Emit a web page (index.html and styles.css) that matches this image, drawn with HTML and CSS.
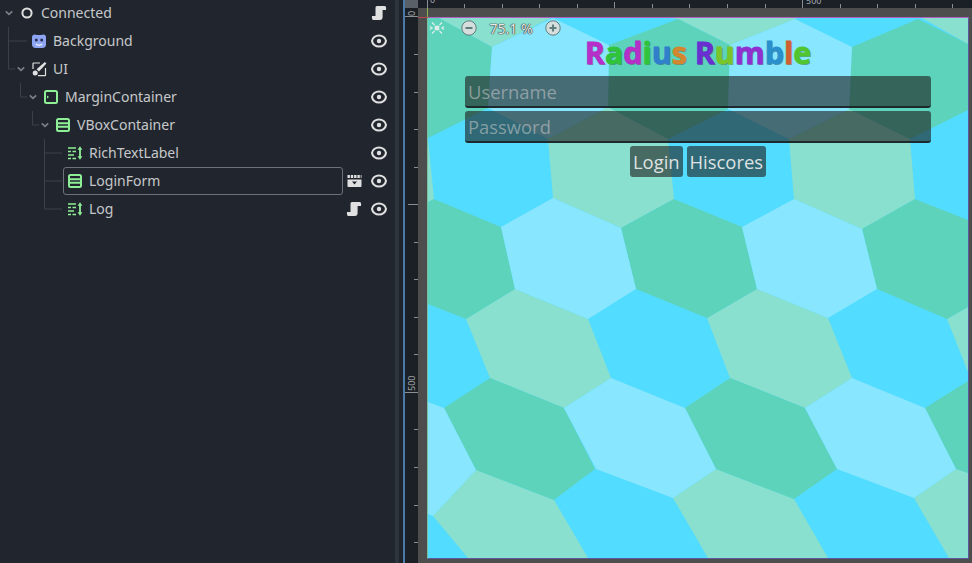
FILE: index.html
```html
<!DOCTYPE html>
<html>
<head>
    <meta charset="utf-8" />
    <title>Radius Rumble - Scene</title>
    <link rel="stylesheet" href="styles.css">
</head>
<body>
    <svg width="0" height="0" class="defs">
        <defs>
            <symbol id="chev" viewBox="0 0 14 14"><path d="M4.8 5.3 8 8.3 11.2 5.3" fill="none" stroke="#7c8187" stroke-width="1.7"/></symbol>
            <symbol id="eye" viewBox="0 0 16 16"><path d="M8 2.4C11.6 2.4 14.6 5 15 8 14.6 11 11.6 13.6 8 13.6 4.4 13.6 1.4 11 1 8 1.4 5 4.4 2.4 8 2.4Z" fill="none" stroke="#e0e0e0" stroke-width="2"/><circle cx="8" cy="8" r="2.2" fill="#e0e0e0"/></symbol>
            <symbol id="script" viewBox="0 0 16 16"><path d="M6 1H13.5C15 1 15.4 2.6 15 5H11.6V12C11.6 14 10.6 15 9 15H2.5C1.2 15 .7 13.5 1 11H4.5V3C4.5 1.8 5 1 6 1Z" fill="#e0e0e0"/></symbol>
            <symbol id="vbox" viewBox="0 0 16 16"><rect x="2" y="2" width="12" height="12" rx="1.5" fill="none" stroke="#8eef97" stroke-width="2"/><path d="M2 6.3H14M2 9.7H14" stroke="#8eef97" stroke-width="2"/></symbol>
            <symbol id="rich" viewBox="0 0 16 16"><path d="M1 3H9M1 6.5H4M5.5 6.5H9M1 10H7M1 13.5H4M5.5 13.5H9" stroke="#8eef97" stroke-width="1.6" fill="none"/><path d="M13 3V13" stroke="#8eef97" stroke-width="1.8"/><path d="M10.6 4.8 13 1.2 15.4 4.8ZM10.6 11.2 13 14.8 15.4 11.2Z" fill="#8eef97"/></symbol>
        </defs>
    </svg>

    <div class="editor">
        <div class="tree">
            <svg class="guides" width="70" height="220">
                <path d="M8.5 27V69H15M8.5 41H27M20.5 83V97H27M32.5 111V125H39M44.5 139V209H62M44.5 153H62M44.5 181H62" fill="none" stroke="#3c4149"/>
            </svg>

            <div class="row level-0">
                <span class="arrow"><svg width="14" height="14"><use href="#chev"/></svg></span>
                <div class="node">
                    <svg class="icon" viewBox="0 0 16 16"><circle cx="8" cy="8" r="4.6" fill="none" stroke="#e0e0e0" stroke-width="2"/></svg>
                    <span>Connected</span>
                </div>
                <div class="tools"><span class="slot"></span><svg class="icon"><use href="#script"/></svg></div>
            </div>
            <div class="row level-1">
                <span class="arrow"></span>
                <div class="node">
                    <svg class="icon" viewBox="0 0 16 16">
                        <path d="M4 1.5C5.5 2.3 10.5 2.3 12 1.5 14 1.5 15 2.8 15 4.5V11.5C15 13.5 13.5 15 11.5 15H4.5C2.5 15 1 13.5 1 11.5V4.5C1 2.8 2 1.5 4 1.5Z" fill="#8da5f3"/>
                        <circle cx="5.3" cy="7" r="1.5" fill="#2a3150"/><circle cx="10.7" cy="7" r="1.5" fill="#2a3150"/>
                        <path d="M4.8 11C6.5 12.6 9.5 12.6 11.2 11" fill="none" stroke="#e8ecff" stroke-width="1.4"/>
                    </svg>
                    <span>Background</span>
                </div>
                <div class="tools"><span class="slot"></span><svg class="icon"><use href="#eye"/></svg></div>
            </div>
            <div class="row level-1">
                <span class="arrow"><svg width="14" height="14"><use href="#chev"/></svg></span>
                <div class="node">
                    <svg class="icon" viewBox="0 0 16 16">
                        <path d="M9 2H3C2.4 2 2 2.4 2 3V8M14.5 7V14C14.5 14.4 14.3 14.6 14 14.6H7" fill="none" stroke="#e0e0e0" stroke-width="1.2"/>
                        <path d="M13.8 1 15.4 2.6 8 10.4 5.6 8.2Z" fill="#e0e0e0"/>
                        <circle cx="4.2" cy="12" r="2.5" fill="#e0e0e0"/>
                    </svg>
                    <span>UI</span>
                </div>
                <div class="tools"><span class="slot"></span><svg class="icon"><use href="#eye"/></svg></div>
            </div>
            <div class="row level-2">
                <span class="arrow"><svg width="14" height="14"><use href="#chev"/></svg></span>
                <div class="node">
                    <svg class="icon" viewBox="0 0 16 16">
                        <rect x="2" y="2" width="12" height="12" rx="1.5" fill="none" stroke="#8eef97" stroke-width="2"/>
                        <path d="M4 6.5 6 8 4 9.5Z" fill="#8eef97"/>
                    </svg>
                    <span>MarginContainer</span>
                </div>
                <div class="tools"><span class="slot"></span><svg class="icon"><use href="#eye"/></svg></div>
            </div>
            <div class="row level-3">
                <span class="arrow"><svg width="14" height="14"><use href="#chev"/></svg></span>
                <div class="node">
                    <svg class="icon"><use href="#vbox"/></svg>
                    <span>VBoxContainer</span>
                </div>
                <div class="tools"><span class="slot"></span><svg class="icon"><use href="#eye"/></svg></div>
            </div>
            <div class="row level-4">
                <span class="arrow"></span>
                <div class="node">
                    <svg class="icon"><use href="#rich"/></svg>
                    <span>RichTextLabel</span>
                </div>
                <div class="tools"><span class="slot"></span><svg class="icon"><use href="#eye"/></svg></div>
            </div>
            <div class="row level-4">
                <span class="arrow"></span>
                <div class="node selected">
                    <svg class="icon"><use href="#vbox"/></svg>
                    <span>LoginForm</span>
                </div>
                <div class="tools">
                    <svg class="icon" viewBox="0 0 16 16">
                        <path d="M1.5 3.5H15.5" stroke="#e0e0e0" stroke-width="3" stroke-dasharray="2.4 .9" fill="none"/>
                        <path d="M1.5 6.5H15.5V13.2C15.5 13.7 15.2 14 14.7 14H2.3C1.8 14 1.5 13.7 1.5 13.2Z" fill="#e0e0e0"/>
                        <path d="M6 8.5H11L8.5 11.6Z" fill="#21262e"/>
                    </svg>
                    <svg class="icon"><use href="#eye"/></svg>
                </div>
            </div>
            <div class="row level-4">
                <span class="arrow"></span>
                <div class="node">
                    <svg class="icon"><use href="#rich"/></svg>
                    <span>Log</span>
                </div>
                <div class="tools"><svg class="icon"><use href="#script"/></svg><svg class="icon"><use href="#eye"/></svg></div>
            </div>
        </div>

        <div class="splitter"></div>

        <div class="viewport">
            <div class="corner"><div class="corner-top"></div><svg class="corner-label" width="13" height="9"><text transform="translate(10 8) rotate(-90)" class="ruler-text">0</text></svg></div>
            <svg class="ruler-h" width="554" height="8">
                <path d="M9.5 0V8M46.5 4V8M84.5 4V8M121.5 4V8M159.5 4V8M196.5 2V8M234.5 4V8M271.5 4V8M309.5 4V8M347.5 4V8M384.5 0V8M422.5 4V8M459.5 4V8M497.5 4V8M534.5 4V8" stroke="#8a8e93"/>
                <text x="12" y="3" class="ruler-text">0</text>
                <text x="388" y="4" class="ruler-text">500</text>
            </svg>
            <svg class="ruler-v" width="13" height="546">
                <path d="M0 8.5H13M9 46.5H13M9 84.5H13M9 121.5H13M9 159.5H13M3 196.5H13M9 234.5H13M9 271.5H13M9 309.5H13M9 346.5H13M0 384.5H13M9 421.5H13M9 459.5H13M9 497.5H13M9 534.5H13" stroke="#8a8e93"/>
                <text transform="translate(10 383) rotate(-90)" class="ruler-text">500</text>
            </svg>

            <div class="canvas">
                <div class="game">
                    <svg class="hexes" width="540" height="540" viewBox="0 1 540 540">
                        <rect width="540" height="541" fill="#52dcff"/>
                        <g class="pale">
                            <polygon points="9,0 64,30 125,0"/>
                            <polygon points="232,0 250,2 302,28 367,2 370,0"/>
                            <polygon points="492,0 540,0 540,27"/>
                            <polygon points="0,122 6,182 0,185"/>
                            <polygon points="120,122 180,90 240,122 246,182 193,211 125,181"/>
                            <polygon points="361,122 421,92 482,122 487,182 434,212 366,182"/>
                            <polygon points="87,272 160,302 183,361 136,391 62,361 38,302"/>
                            <polygon points="329,272 400,301 424,361 377,391 302,361 279,301"/>
                            <polygon points="519,302 540,290 540,355"/>
                            <polygon points="48,453 126,483 160,541 40,541 5,499"/>
                            <polygon points="245,481 288,452 366,482 400,541 280,541"/>
                            <polygon points="486,481 528,452 540,456 540,541 521,541"/>
                        </g>
                        <g class="mid">
                            <polygon points="0,0 9,0 64,30 60,91 0,121"/>
                            <polygon points="250,2 302,28 300,92 240,122 180,90 181,28"/>
                            <polygon points="490,2 540,27 540,93 482,122 421,92 424,30"/>
                            <polygon points="0,185 6,182 73,210 87,272 38,302 0,287"/>
                            <polygon points="193,211 246,182 314,210 329,272 279,301 208,272"/>
                            <polygon points="434,212 487,182 540,203 540,290 519,302 449,272"/>
                            <polygon points="62,361 136,391 167,452 126,483 48,453 16,391"/>
                            <polygon points="302,361 377,391 409,452 366,482 288,452 257,391"/>
                            <polygon points="497,391 540,364 540,456 528,452"/>
                        </g>
                        <g class="light">
                            <polygon points="64,30 125,1 181,28 180,90 120,122 60,91"/>
                            <polygon points="302,28 367,2 424,30 421,92 361,122 300,92"/>
                            <polygon points="73,210 125,181 193,211 208,272 160,302 87,272"/>
                            <polygon points="314,210 366,182 434,212 449,272 400,301 329,272"/>
                            <polygon points="0,385 16,391 48,453 5,499 0,497"/>
                            <polygon points="183,361 257,391 288,452 245,481 168,452 136,391"/>
                            <polygon points="424,361 497,391 528,452 486,481 409,452 377,391"/>
                        </g>
                    </svg>

                    <div class="zoom-bar">
                        <svg class="zoom-reset" viewBox="0 0 16 16">
                            <rect x="5.7" y="5.7" width="4.6" height="4.6" fill="#dcefea"/>
                            <path d="M3 2.5 5.5 5M13 2.5 10.5 5M3 13.5 5.5 11M13 13.5 10.5 11M1 6.5 3 8 1 9.5M15 6.5 13 8 15 9.5" stroke="#dcefea" stroke-width="1.3" fill="none"/>
                        </svg>
                        <svg class="zoom-btn" viewBox="0 0 16 16"><circle cx="8" cy="8" r="7.2" fill="#d5dedd" stroke="#5f7d7d" stroke-width="1"/><path d="M4.5 8H11.5" stroke="#5f7d7d" stroke-width="2"/></svg>
                        <span class="zoom-value">75.1 %</span>
                        <svg class="zoom-btn" viewBox="0 0 16 16"><circle cx="8" cy="8" r="7.2" fill="#d5dedd" stroke="#5f7d7d" stroke-width="1"/><path d="M4.5 8H11.5M8 4.5V11.5" stroke="#5f7d7d" stroke-width="2"/></svg>
                    </div>

                    <div class="form">
                        <div class="title"><span class="c1">R</span><span class="c2">a</span><span class="c1">d</span><span class="c2">i</span><span class="c3">u</span><span class="c4">s</span> <span class="c5">R</span><span class="c6">u</span><span class="c7">m</span><span class="c8">b</span><span class="c9">l</span><span class="c10">e</span></div>
                        <div class="field">Username</div>
                        <div class="field">Password</div>
                        <div class="buttons">
                            <div class="btn">Login</div>
                            <div class="btn">Hiscores</div>
                        </div>
                    </div>
                </div>
            </div>
        </div>
    </div>
</body>
</html>
```
FILE: styles.css
```css
* {
    box-sizing: border-box;
}

html, body {
    margin: 0;
    height: 100%;
    overflow: hidden;
}

body {
    font-family: "Noto Sans", sans-serif;
    background-color: #21262e;
}

.defs {
    position: absolute;
}

.editor {
    display: flex;
    width: 972px;
    height: 563px;
}

/* scene tree */
.tree {
    position: relative;
    width: 395px;
    background-color: #21262e;
    color: #c6c8ca;
    font-size: 14px;
}

.guides {
    position: absolute;
    left: 0;
    top: 0;
}

.row {
    position: relative;
    display: flex;
    align-items: center;
    height: 28px;
}

.row:first-of-type {
    margin-top: -1px;
}

.level-0 { padding-left: 1px; }
.level-1 { padding-left: 13px; }
.level-2 { padding-left: 25px; }
.level-3 { padding-left: 37px; }
.level-4 { padding-left: 49px; }

.arrow {
    display: flex;
    width: 14px;
    height: 14px;
    flex-shrink: 0;
}

.node {
    display: flex;
    align-items: center;
    gap: 6px;
    flex: 1;
    height: 28px;
    padding-left: 3px;
    border: 1px solid transparent;
    border-radius: 3px;
}

.node span {
    margin-bottom: 2px;
}

.selected {
    border-color: #6d7178;
}

.icon {
    display: block;
    width: 16px;
    height: 16px;
    flex-shrink: 0;
}

.tools {
    display: flex;
    gap: 9px;
    margin-left: 3px;
    padding-right: 8px;
}

.slot {
    width: 16px;
    height: 16px;
}

.splitter {
    width: 10px;
    background: linear-gradient(to right, #2d343e 0 4px, #1f242c 4px 8px, #4a7aa8 8px);
}

/* 2d viewport */
.viewport {
    flex: 1;
    display: grid;
    grid-template-columns: 13px 1fr;
    grid-template-rows: 8px 1fr;
    background-color: #1b1f26;
}

.corner {
    grid-row: 1 / 2;
    position: relative;
    background-color: #5a6068;
}

.corner-top {
    height: 8px;
}

.corner-label {
    position: absolute;
    left: 0;
    top: 8px;
    z-index: 2;
}

.ruler-h, .ruler-v {
    display: block;
    background-color: #1b1f26;
}

.ruler-v {
    grid-row: 2;
    grid-column: 1;
}

.ruler-h {
    grid-row: 1;
    grid-column: 2;
}

.ruler-text {
    font-size: 9px;
    fill: #a3a7ab;
}

.canvas {
    grid-row: 2;
    grid-column: 2;
    position: relative;
    padding: 9px 3px 0 9px;
    background-color: #4d4d4d;
}

.canvas::before {
    content: "";
    position: absolute;
    left: 9px;
    top: 0;
    width: 1px;
    height: 9px;
    background-color: #8fb84c;
}

.canvas::after {
    content: "";
    position: absolute;
    left: 0;
    top: 9px;
    width: 10px;
    height: 1px;
    background-color: #b8474f;
}

.game {
    position: relative;
    width: 542px;
    height: 542px;
    border: 1px solid #5e5a9e;
    border-top-color: #b061c0;
    border-left-color: #79bfa0;
    font-family: "Open Sans", sans-serif;
}

.hexes {
    position: absolute;
    left: 0;
    top: 0;
}

.pale { fill: #8ae0ce; }
.mid { fill: #5ed3bc; }
.light { fill: #88e6ff; }

.zoom-bar {
    position: absolute;
    left: 1px;
    top: 2px;
    display: flex;
    align-items: center;
    height: 16px;
    color: #e6eaea;
    font-family: "Noto Sans", sans-serif;
    font-size: 14px;
}

.zoom-reset {
    width: 16px;
    height: 16px;
    margin-right: 16px;
}

.zoom-btn {
    width: 16px;
    height: 16px;
}

.zoom-value {
    width: 68px;
    text-align: center;
    text-shadow: 0 0 1px #333, 0 0 1px #333, 0 0 1px #333;
}

.form {
    position: relative;
    display: flex;
    flex-direction: column;
    padding: 0 37px;
}

.title {
    height: 58px;
    padding-top: 15px;
    font-size: 30.4px;
    font-weight: 700;
    line-height: 40px;
    text-align: center;
    text-shadow: 1px 1px 0 rgba(60, 90, 90, 0.55);
}

.title span {
    -webkit-text-stroke: 0.8px currentColor;
}

.c1 { color: #b52fc8; }
.c2 { color: #2fc43a; }
.c3 { color: #2f7fcc; }
.c4 { color: #d4862f; }
.c5 { color: #6a2fd0; }
.c6 { color: #7ac52a; }
.c7 { color: #9030d0; }
.c8 { color: #2a90cc; }
.c9 { color: #d06030; }
.c10 { color: #50c52f; }

.field {
    height: 32px;
    margin-bottom: 3px;
    padding-left: 3px;
    border-bottom: 2px solid rgba(25, 30, 35, 0.85);
    border-radius: 3px;
    background-color: rgba(27, 27, 27, 0.6);
    color: rgba(205, 205, 205, 0.55);
    font-size: 18.4px;
    font-weight: 500;
    line-height: 32px;
}

.buttons {
    display: flex;
    justify-content: center;
    gap: 4px;
}

.btn {
    height: 31px;
    padding: 0 3px;
    border-radius: 3px;
    background-color: rgba(27, 27, 27, 0.6);
    color: #dfe2e2;
    font-size: 18.4px;
    font-weight: 500;
    line-height: 31px;
}
```
